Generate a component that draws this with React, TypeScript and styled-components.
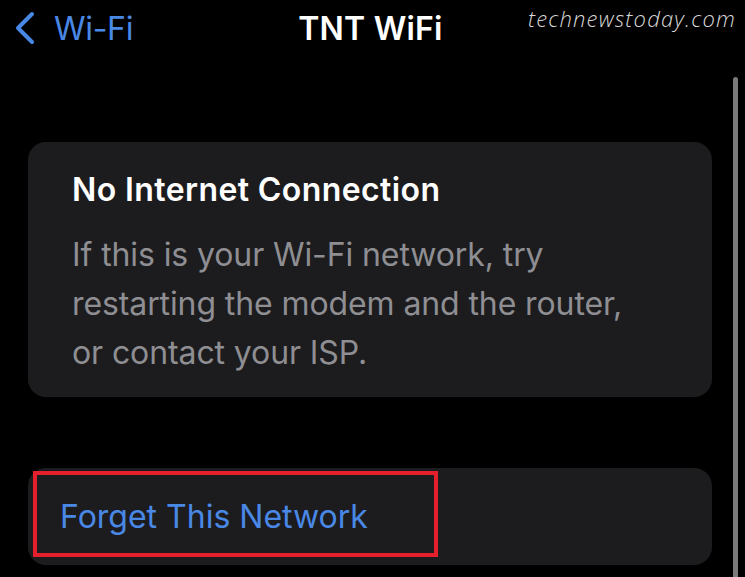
import React from 'react';
import styled, { createGlobalStyle } from 'styled-components';

const GlobalStyle = createGlobalStyle`
  html, body {
    margin: 0;
    padding: 0;
    background: #000;
  }
  body {
    font-family: Inter, 'Noto Sans', sans-serif;
    -webkit-font-smoothing: antialiased;
  }
`;

const Screen = styled.div`
  position: relative;
  width: 745px;
  height: 577px;
  overflow: hidden;
  background: #000;
  color: #fff;
`;

const NavBar = styled.div`
  display: grid;
  grid-template-columns: 1fr auto 1fr;
  align-items: center;
  height: 56px;
  padding: 0 14px;
`;

const BackButton = styled.div`
  display: flex;
  align-items: center;
  gap: 18px;
  color: #4a88e6;
  font-size: 32px;
  letter-spacing: -0.3px;
`;

const NavTitle = styled.div`
  font-size: 32px;
  font-weight: 600;
  letter-spacing: 0.2px;
  margin-right: 4px;
`;

const Watermark = styled.div`
  position: absolute;
  top: 3px;
  right: 9px;
  font-family: 'Open Sans', sans-serif;
  font-style: italic;
  font-weight: 300;
  font-size: 22px;
  letter-spacing: 1.2px;
  color: #d8d8d8;
`;

const ScrollIndicator = styled.div`
  position: absolute;
  top: 77px;
  bottom: 0;
  left: 733px;
  width: 5px;
  border-radius: 3px 3px 0 0;
  background: #7a7a7a;
`;

const Content = styled.div`
  display: flex;
  flex-direction: column;
  gap: 71px;
  padding: 86px 33px 0 28px;
`;

const Card = styled.div<{ $pad?: string }>`
  background: #1c1c1e;
  border-radius: 18px;
  padding: ${(p) => p.$pad || '0'};
`;

const CardTitle = styled.div`
  font-size: 32px;
  font-weight: 600;
  line-height: 40px;
  letter-spacing: 0.4px;
  margin-bottom: 20px;
`;

const CardBody = styled.div`
  font-size: 32px;
  line-height: 49px;
  color: #8e8e93;
  letter-spacing: -0.1px;
`;

const ActionRow = styled.div`
  display: flex;
  align-items: center;
  width: 374px;
  height: 78px;
  margin-left: 5px;
  padding-left: 23px;
  padding-top: 4px;
  box-sizing: border-box;
  width: 405px;
  height: 86px;
  border: 4px solid #e3202b;
  color: #4a88e6;
  font-size: 32px;
`;

export default function App() {
  return (
    <>
      <GlobalStyle />
      <Screen>
        <NavBar>
          <BackButton>
            <svg width="22" height="34" viewBox="0 0 22 34" fill="none">
              <path
                d="M18 3 L4 17 L18 31"
                stroke="#4a88e6"
                strokeWidth="4"
                strokeLinecap="round"
                strokeLinejoin="round"
              />
            </svg>
            Wi-Fi
          </BackButton>
          <NavTitle>TNT WiFi</NavTitle>
          <div />
        </NavBar>
        <Watermark>technewstoday.com</Watermark>
        <ScrollIndicator />
        <Content>
          <Card $pad="28px 44px 20px">
            <CardTitle>No Internet Connection</CardTitle>
            <CardBody>
              If this is your Wi-Fi network, try
              <br />
              restarting the modem and the router,
              <br />
              or contact your ISP.
            </CardBody>
          </Card>
          <Card $pad="3px 0 8px">
            <ActionRow>Forget This Network</ActionRow>
          </Card>
        </Content>
      </Screen>
    </>
  );
}
